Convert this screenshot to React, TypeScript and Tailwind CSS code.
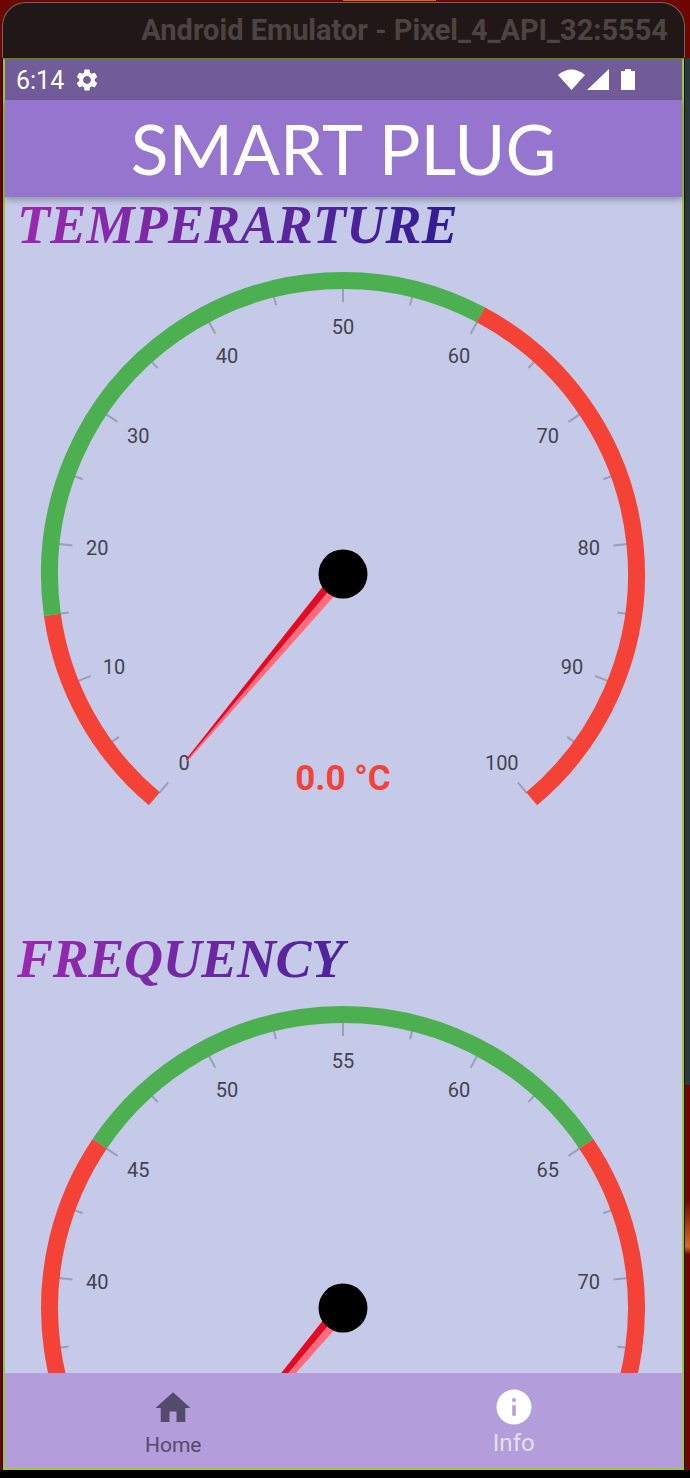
import React from "react";

const CX = 338;
const CY = 317;

function pt(deg: number, r: number): [number, number] {
  const a = (deg * Math.PI) / 180;
  return [CX + r * Math.sin(a), CY - r * Math.cos(a)];
}

function arc(a1: number, a2: number, r: number) {
  const [x1, y1] = pt(a1, r);
  const [x2, y2] = pt(a2, r);
  return `M${x1} ${y1} A${r} ${r} 0 ${a2 - a1 > 180 ? 1 : 0} 1 ${x2} ${y2}`;
}

type Seg = { from: number; to: number; color: string };

function Gauge({ labels, segs, value }: { labels: string[]; segs: Seg[]; value?: string }) {
  const needle = -140;
  const dir = (needle * Math.PI) / 180;
  const px = Math.cos(dir);
  const py = Math.sin(dir);
  const tip = pt(needle, 243);
  const W0 = 8;
  const W1 = 1.2;
  const light = `${CX - px * W0},${CY - py * W0} ${CX},${CY} ${tip[0]},${tip[1]} ${tip[0] - px * W1},${tip[1] - py * W1}`;
  const dark = `${CX + px * W0},${CY + py * W0} ${CX},${CY} ${tip[0]},${tip[1]} ${tip[0] + px * W1},${tip[1] + py * W1}`;
  const ticks: React.ReactNode[] = [];
  for (let i = 0; i <= 20; i++) {
    const a = -140 + 14 * i;
    const major = i % 2 === 0;
    const [x1, y1] = pt(a, 286);
    const [x2, y2] = pt(a, major ? 272 : 277);
    ticks.push(<line key={i} x1={x1} y1={y1} x2={x2} y2={y2} stroke="#9b9eb4" strokeWidth={2} />);
  }
  return (
    <svg width={677} height={674} viewBox="0 0 677 674" className="block font-['Roboto',sans-serif]">
      {ticks}
      {segs.map((s, i) => (
        <path key={i} d={arc(s.from, s.to, 293.5)} fill="none" stroke={s.color} strokeWidth={17} />
      ))}
      {labels.map((l, i) => {
        if (!l) return null;
        const [x, y] = pt(-140 + 28 * i, 247);
        return (
          <text key={i} x={x} y={y + 7} textAnchor="middle" fontSize={20} fill="#41434f">
            {l}
          </text>
        );
      })}
      <polygon points={light} fill="#ff6b7b" />
      <polygon points={dark} fill="#e30b23" />
      <circle cx={CX} cy={CY} r={24.5} fill="#000000" />
      {value && (
        <text x={CX} y={CY + 216} textAnchor="middle" fontSize={35} fontWeight={700} fill="#f44336">
          {value}
        </text>
      )}
    </svg>
  );
}

function Heading({ children, tracking }: { children: string; tracking: string }) {
  return (
    <div className="h-[60px] pl-[12px]">
      <div
        className={`w-[480px] pr-[6px] bg-linear-to-r from-[#9c27b0] to-[#311b92] to-90% bg-clip-text text-transparent font-['Liberation_Serif',serif] font-bold italic text-[54px] leading-[56px] ${tracking}`}
      >
        {children}
      </div>
    </div>
  );
}

const RED = "#f44336";
const GREEN = "#4caf50";

export default function App() {
  return (
    <div className="w-[690px] h-[1478px] overflow-hidden flex flex-col bg-[#6d0503]">
      <div className="h-[2px] shrink-0">
        <div className="h-[1px] ml-[343px] w-[93px] bg-[#d9691f]" />
      </div>
      <div className="h-[56px] ml-[2px] mr-[5px] shrink-0 rounded-t-[24px] border-t border-x border-[#6e6665] bg-[#211716] flex items-center justify-end pr-[16px]">
        <span className="font-['Roboto',sans-serif] font-bold text-[29px] text-[#4d4442] whitespace-nowrap">
          Android Emulator - Pixel_4_API_32:5554
        </span>
      </div>
      <div className="flex-1 min-h-0 flex">
        <div className="w-[3px] shrink-0 flex">
          <div className="w-[2px] bg-[#6d0503]" />
          <div className="w-[1px] bg-[#1b1212]" />
        </div>
        <div className="w-[681px] shrink-0 border-x-2 border-b-2 border-t-2 border-b-[#a2c437] border-x-[#a2c437] border-t-[#6a7a3a] flex flex-col bg-[#c5cae9]">
          <div className="h-[40px] shrink-0 bg-[#725b99] flex items-center justify-between pl-[11px] pr-[46px] text-white">
            <div className="flex items-center gap-[10px]">
              <span className="font-['Roboto',sans-serif] text-[25px] leading-none">6:14</span>
              <svg width="26" height="26" viewBox="0 0 24 24" fill="#ffffff">
                <path d="M19.14 12.94c.04-.3.06-.61.06-.94 0-.32-.02-.64-.07-.94l2.03-1.58a.49.49 0 0 0 .12-.61l-1.92-3.32a.488.488 0 0 0-.59-.22l-2.39.96c-.5-.38-1.03-.7-1.62-.94l-.36-2.54a.484.484 0 0 0-.48-.41h-3.84c-.24 0-.43.17-.47.41l-.36 2.54c-.59.24-1.13.57-1.62.94l-2.39-.96c-.22-.08-.47 0-.59.22L2.74 8.87c-.12.21-.08.47.12.61l2.03 1.58c-.05.3-.09.63-.09.94s.02.64.07.94l-2.03 1.58a.49.49 0 0 0-.12.61l1.92 3.32c.12.22.37.29.59.22l2.39-.96c.5.38 1.03.7 1.62.94l.36 2.54c.05.24.24.41.48.41h3.84c.24 0 .44-.17.47-.41l.36-2.54c.59-.24 1.13-.56 1.62-.94l2.39.96c.22.08.47 0 .59-.22l1.92-3.32c.12-.22.07-.47-.12-.61l-2.01-1.58zM12 15.6c-1.98 0-3.6-1.62-3.6-3.6s1.62-3.6 3.6-3.6 3.6 1.62 3.6 3.6-1.62 3.6-3.6 3.6z" />
              </svg>
            </div>
            <svg width="78" height="24" viewBox="0 0 78 24" fill="#ffffff">
              <path d="M0 7 Q13.5 -4 27 7 L13.5 22 Z" />
              <path d="M29 22 L51 1 L51 22 Z" />
              <path d="M63 3 H67 V1 H73 V3 H77 V22 H63 Z" />
            </svg>
          </div>
          <div className="h-[97px] shrink-0 relative z-10 bg-[#9575cd] shadow-[0_3px_6px_rgba(0,0,0,0.28)] flex items-center justify-center">
            <span className="font-['Lato',sans-serif] text-white text-[69.5px] leading-none">SMART PLUG</span>
          </div>
          <div className="flex-1 min-h-0 overflow-hidden">
            <Heading tracking="tracking-[0.25px]">TEMPERARTURE</Heading>
            <Gauge
              labels={["0", "10", "20", "30", "40", "50", "60", "70", "80", "90", "100"]}
              segs={[
                { from: -140, to: -98, color: RED },
                { from: -98, to: 28, color: GREEN },
                { from: 28, to: 140, color: RED },
              ]}
              value="0.0 °C"
            />
            <Heading tracking="tracking-[-0.35px]">FREQUENCY</Heading>
            <Gauge
              labels={["", "", "40", "45", "50", "55", "60", "65", "70", "", ""]}
              segs={[
                { from: -140, to: -56, color: RED },
                { from: -56, to: 56, color: GREEN },
                { from: 56, to: 140, color: RED },
              ]}
            />
          </div>
          <div className="h-[95px] shrink-0 bg-[#b39ddb] flex relative z-10">
            <div className="flex-1 flex flex-col items-center pt-[14px] pr-[4px]">
              <svg width="42" height="42" viewBox="0 0 24 24" fill="#544a6b">
                <path d="M10 20v-6h4v6h5v-8h3L12 3 2 12h3v8z" />
              </svg>
              <span className="font-['Roboto',sans-serif] text-[21px] leading-[24px] mt-[4px] text-[#544a6b]">Home</span>
            </div>
            <div className="flex-1 flex flex-col items-center pt-[13px]">
              <svg width="42" height="42" viewBox="0 0 24 24" fill="#ffffff">
                <path d="M12 2C6.48 2 2 6.48 2 12s4.48 10 10 10 10-4.48 10-10S17.52 2 12 2zm1 15h-2v-6h2v6zm0-8h-2V7h2v2z" />
              </svg>
              <span className="font-['Roboto',sans-serif] text-[24px] leading-[28px] mt-[1px] text-[#e6ddf3]">Info</span>
            </div>
          </div>
        </div>
        <div className="flex-1 flex flex-col">
          <div className="h-[1027px] flex">
            <div className="w-[1px] bg-[#1b1212]" />
            <div className="flex-1 bg-[#28383e]" />
          </div>
          <div className="flex-1 flex">
            <div className="w-[1px] bg-[#1b1212]" />
            <div className="flex-1 bg-linear-to-b from-[#6d0503] from-30% via-[#d9691f] via-42% to-[#6d0503] to-44%" />
          </div>
        </div>
      </div>
      <div className="h-[8px] shrink-0 bg-black" />
    </div>
  );
}
